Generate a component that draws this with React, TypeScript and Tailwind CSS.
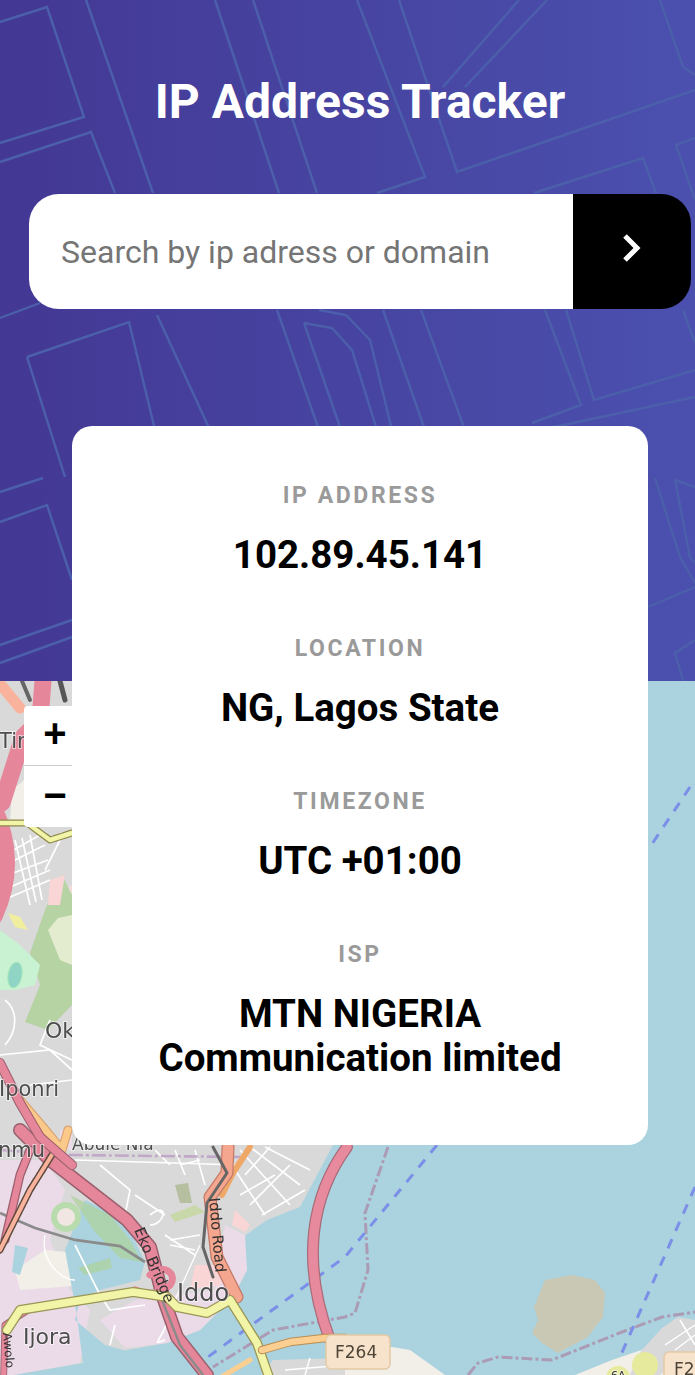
const patternLines = [
  "0,22 47,7 84,117 0,143",
  "0,162 91,132 115,193",
  "86,0 153,193",
  "215,0 279,193",
  "253,0 317,193",
  "357,0 425,177 377,193",
  "399,0 457,172 695,90",
  "443,87 519,0",
  "465,87 547,0",
  "534,193 643,158 656,193",
  "695,138 676,145 695,200",
  "660,0 683,67 695,75",
  "0,318 40,303",
  "27,357 129,322 155,430",
  "27,357 65,477",
  "157,315 210,430",
  "277,310 319,430",
  "304,323 332,328 352,350 377,430",
  "304,323 341,430",
  "319,310 346,315 370,340 392,430",
  "383,310 425,430",
  "421,310 465,430",
  "566,310 594,400 695,370",
  "545,310 581,405 532,423",
  "695,397 540,430",
  "0,492 43,478",
  "0,522 47,505 72,580",
  "0,645 72,620",
  "0,663 72,637",
  "655,478 680,557 695,583",
  "695,487 675,480 690,557 695,563",
  "648,607 695,587",
  "695,640 675,653 685,687",
  "683,310 695,343",
];

const stats = [
  { label: "IP ADDRESS", value: ["102.89.45.141"] },
  { label: "LOCATION", value: ["NG, Lagos State"] },
  { label: "TIMEZONE", value: ["UTC +01:00"] },
  { label: "ISP", value: ["MTN NIGERIA", "Communication limited"] },
];

function MapDrawing() {
  return (
    <svg viewBox="0 681 695 694" className="block h-full w-full">
      <defs>
        <filter id="soft" x="-5%" y="-5%" width="110%" height="110%">
          <feGaussianBlur stdDeviation="0.7" />
        </filter>
      </defs>
      <g filter="url(#soft)" fontFamily="'DejaVu Sans', sans-serif">
        <rect x="0" y="681" width="695" height="694" fill="#aad3df" />

        {/* land, left side and shore */}
        <polygon
          fill="#d9d9d9"
          points="0,681 333,681 333,1145 300,1207 267,1220 243,1237 247,1270 233,1297 200,1330 167,1343 127,1350 83,1363 13,1375 0,1375"
        />
        <polygon fill="#ebdbe8" points="0,1160 45,1160 65,1190 50,1240 70,1290 90,1310 80,1363 13,1375 0,1375" />
        <polygon fill="#ebdbe8" points="225,1225 245,1235 247,1270 233,1297 200,1330 167,1343 125,1348 100,1320 135,1300 215,1290" />
        <polygon fill="#ebdbe8" points="60,1130 72,1130 72,1150 60,1150" />
        <polygon fill="#f2efe9" points="45,1250 100,1255 85,1285 20,1290 15,1270" />
        <polygon fill="#ebdbe8" points="65,720 72,720 72,760 65,760" />
        <polygon fill="#f2dad9" points="55,895 72,885 72,915 58,920" />
        <polygon fill="#f9d5d5" points="195,1265 215,1265 222,1285 190,1290" />
        <polygon fill="#f9d5d5" points="235,1210 250,1225 245,1232 232,1225" />
        <polygon fill="#aad3df" points="85,1200 125,1220 145,1262 140,1280 100,1290 80,1300 75,1320 105,1345 130,1352 83,1363 76,1310 65,1250" />
        <polygon fill="#aad3df" points="15,1245 28,1248 20,1275 12,1272" />
        <polygon fill="#add19e" points="70,1195 110,1215 130,1240 142,1262 120,1258 95,1232" opacity="0.75" />
        <polygon fill="#add19e" points="78,1268 110,1258 112,1268 85,1275" opacity="0.75" />
        <circle cx="66" cy="1217" r="15" fill="#b9dcae" />
        <circle cx="66" cy="1217" r="9" fill="#f2e6e2" />
        <polygon fill="#c8d8a8" points="170,1215 195,1205 205,1212 175,1222" />
        <polygon fill="#b6bfa0" points="175,1185 188,1183 192,1203 180,1203" />

        {/* parks on the left */}
        <polygon fill="#b6d3a4" points="30,953 45,910 57,883 62,875 72,895 72,1005 48,1030 25,1022 40,985" />
        <polygon fill="#e4ecd0" points="48,930 58,918 72,915 72,965 60,960" />
        <polygon fill="#c8f2d2" points="0,930 20,945 40,965 35,985 15,990 0,990" />
        <ellipse cx="15" cy="975" rx="7" ry="13" fill="#8fd4c4" stroke="#a8e8b8" transform="rotate(10 15 975)" />
        <polygon fill="#f1ee9e" points="8,913 20,917 28,930 15,927" />
        <polygon fill="#f9d5d5" points="50,880 65,875 60,905 48,905" />
        <polygon fill="#f2efe9" points="12,790 24,780 24,823 10,823" />

        {/* streets */}
        <g fill="none" stroke="#ffffff" strokeWidth="1.7">
          <path d="M5,855 L40,835 M5,865 L45,845 M8,875 L48,860 M8,888 L50,870 M8,898 L50,880 M15,840 L30,905 M30,835 L42,900 M22,838 L36,902 M60,840 L45,870" />
          <path d="M5,1000 C18,1010 18,1030 5,1045 M50,1020 L40,1045 L72,1060 M0,1055 L50,1050 L72,1070 M30,1085 L72,1080 M25,1100 L50,1135" />
          <path d="M75,1160 L240,1165 M100,1165 L130,1190 L125,1215 M135,1195 L165,1215 M150,1215 C170,1200 165,1225 150,1225 M170,1240 L200,1235 M170,1245 L195,1250 M165,1235 L195,1255" />
          <path d="M175,1150 L185,1175 M195,1150 L205,1185 M155,1150 L170,1165 M180,1165 L200,1160" />
          <path d="M240,1150 L290,1205 M250,1147 L300,1185 M265,1147 L310,1170 M235,1170 L265,1215 M240,1195 L275,1175 M250,1205 L290,1165 M262,1215 L305,1190 M270,1147 L245,1175" />
          <path d="M75,1245 L100,1295 L110,1310 L145,1305 M115,1325 L110,1345 M170,1315 C160,1345 150,1345 165,1340" />
          <path d="M45,1235 C40,1260 60,1280 75,1280 M175,1300 L200,1245" strokeWidth="1.3" />
        </g>

        {/* boundary and ferry lines */}
        <polyline fill="none" stroke="#ab9bb5" strokeWidth="3" strokeDasharray="11 3 3 3" points="388,1147 365,1213 368,1270 355,1313 345,1317 273,1330 213,1367" />
        <polyline fill="none" stroke="#ab9bb5" strokeWidth="3" strokeDasharray="11 3 3 3" points="468,1375 478,1363 498,1357 552,1360 622,1332 662,1317 695,1312" />
        <polyline fill="none" stroke="#c2a8c8" strokeWidth="2.6" points="0,1150 72,1155 240,1157" strokeDasharray="14 3 3 3" />
        <g fill="none" stroke="#7c8fe8" strokeWidth="3" strokeDasharray="10 9">
          <polyline points="437,1145 345,1257 190,1370" />
          <polyline points="695,1187 620,1357" />
          <polyline points="690,787 648,850" />
        </g>

        {/* bottom right shore and island */}
        <polygon fill="#c8c8b4" points="545,1280 572,1275 595,1280 605,1293 603,1317 588,1337 558,1353 542,1343 532,1333 538,1320 534,1307" />
        <polygon fill="#f2efe9" points="392,1347 410,1350 445,1375 330,1375 330,1350" />
        <polygon fill="#d9d9d9" points="273,1360 345,1358 345,1375 262,1375" />
        <polygon fill="#f2efe9" points="575,1375 612,1360 662,1343 695,1335 695,1375" />
        <polygon fill="#d9d9d9" points="640,1352 662,1328 678,1317 695,1320 695,1352 660,1375 630,1375" />
        <circle cx="618" cy="1378" r="12" fill="#e6ea9c" />
        <circle cx="645" cy="1365" r="13" fill="#e6ea9c" />
        <g stroke="#fff" strokeWidth="1.5" fill="none">
          <path d="M665,1345 L695,1325 M675,1350 L695,1335 M680,1320 L695,1345" />
          <path d="M285,1370 L345,1365 M310,1358 L305,1375" />
        </g>

        {/* grey railway and link road */}
        <polyline fill="none" stroke="#8b8b8b" strokeWidth="2.8" points="0,1213 35,1228 75,1240 120,1246 145,1262" />

        {/* motorways and trunks */}
        <g fill="none" strokeLinejoin="round" strokeLinecap="round">
          <path d="M347,1147 C312,1195 300,1260 330,1340" stroke="#a86c7a" strokeWidth="12" />
          <path d="M347,1147 C312,1195 300,1260 330,1340" stroke="#e88a9e" strokeWidth="9.5" />

          <polyline points="250,1147 233,1173 222,1195" stroke="#f0a868" strokeWidth="6" />
          <polyline points="228,1147 227,1173 210,1197 217,1257 237,1297" stroke="#c47a68" strokeWidth="13" />
          <polyline points="228,1147 227,1173 210,1197 217,1257 237,1297" stroke="#f4a68e" strokeWidth="10.5" />
          <polyline points="213,1147 227,1173 207,1203 203,1247 213,1277" stroke="#666666" strokeWidth="3" />

          <polyline points="20,1130 50,1160 127,1220 150,1247 163,1297 177,1337 207,1375" stroke="#995f6c" strokeWidth="14" />
          <polyline points="20,1130 50,1160 127,1220 150,1247 163,1297 177,1337 207,1375" stroke="#e5869a" strokeWidth="11" />
          <polyline points="162,1300 180,1345 203,1375" stroke="#8b8b8b" strokeWidth="2.4" />
          <path d="M150,1275 C165,1262 178,1275 170,1285 C160,1295 145,1295 135,1290" stroke="#e5869a" strokeWidth="7" />

          <polyline points="3,1400 5,1325 28,1310 60,1304" stroke="#a56b78" strokeWidth="7" />
          <polyline points="3,1400 5,1325 28,1310 60,1304" stroke="#e5869a" strokeWidth="5" />

          <polyline points="30,1150 20,1175 5,1240" stroke="#995f6c" strokeWidth="9" />
          <polyline points="30,1150 20,1175 5,1240" stroke="#e5869a" strokeWidth="6.5" />
          <polyline points="55,1150 30,1190 0,1250" stroke="#5e4a3c" strokeWidth="7" strokeDasharray="5 2" />
          <polyline points="55,1150 30,1190 0,1250" stroke="#f9b29c" strokeWidth="4" />

          <polyline points="20,1100 43,1127 62,1150 68,1130" stroke="#d69e6a" strokeWidth="9" />
          <polyline points="20,1100 43,1127 62,1150 68,1130" stroke="#fbc98a" strokeWidth="7" />

          <polyline points="0,1063 20,1103 40,1137 72,1165" stroke="#995f6c" strokeWidth="10" />
          <polyline points="0,1063 20,1103 40,1137 72,1165" stroke="#e5869a" strokeWidth="8" />

          <polyline points="7,1330 20,1310 133,1292 167,1297 177,1307 207,1313 230,1300 257,1343 270,1380" stroke="#9a9655" strokeWidth="10" />
          <polyline points="7,1330 20,1310 133,1292 167,1297 177,1307 207,1313 230,1300 257,1343 270,1380" stroke="#f2f4a8" strokeWidth="7.5" />

          <polyline points="262,1350 290,1342 325,1338 345,1338" stroke="#b98c52" strokeWidth="8.5" />
          <polyline points="262,1350 290,1342 325,1338 345,1338" stroke="#fbcf92" strokeWidth="6.5" />
          <polyline points="220,1378 250,1360" stroke="#fbcf92" strokeWidth="5" />

          <path d="M43,681 L40,720 L23,737 L2,803" stroke="#e5869a" strokeWidth="17" />
          <path d="M-8,810 C8,845 8,880 -8,915" stroke="#e5869a" strokeWidth="22" />
          <path d="M-3,680 L20,708" stroke="#f9b29c" strokeWidth="11" />
          <polyline points="0,823 27,823 50,840 72,833" stroke="#8e8a4a" strokeWidth="7" strokeDasharray="8 2" />
          <polyline points="0,823 27,823 50,840 72,833" stroke="#f2f4a8" strokeWidth="4.5" />
          <path d="M22,681 L30,700" stroke="#666" strokeWidth="4" />
          <path d="M60,681 L65,700" stroke="#555" strokeWidth="5" />
        </g>

        {/* labels */}
        <g fill="#4d4d4d" stroke="#ffffff" strokeOpacity="0.55" strokeWidth="2" paintOrder="stroke">
          <text x="-1" y="748" fontSize="21">Tir</text>
          <text x="45" y="1038" fontSize="22">Ok</text>
          <text x="-1" y="1096" fontSize="21">Iponri</text>
          <text x="-2" y="1157" fontSize="21">nmu</text>
          <text x="72" y="1150" fontSize="17">Abule Nla</text>
          <text x="177" y="1301" fontSize="24">Iddo</text>
          <text x="23" y="1344" fontSize="22">Ijora</text>
          <text x="0" y="0" fontSize="15" fill="#333" strokeOpacity="0" transform="translate(134 1230) rotate(67)">Eko Bridge</text>
          <text x="0" y="0" fontSize="15" fill="#333" strokeOpacity="0" transform="translate(209 1198) rotate(85)">Iddo Road</text>
          <text x="0" y="0" fontSize="12" fill="#333" strokeOpacity="0" transform="translate(3 1333) rotate(85)">Awolo</text>
          <text x="611" y="1379" fontSize="11" fill="#333">6A</text>
        </g>

        {/* road shields */}
        <g fontSize="17">
          <rect x="326" y="1335" width="64" height="34" rx="5" fill="#f7e3cc" stroke="#e4c9a4" strokeWidth="1.5" />
          <text x="335" y="1358" fill="#4d4437">F264</text>
          <rect x="664" y="1352" width="50" height="34" rx="5" fill="#f7e3cc" stroke="#e4c9a4" strokeWidth="1.5" />
          <text x="674" y="1375" fill="#4d4437">F2</text>
        </g>
      </g>
    </svg>
  );
}

export default function App() {
  return (
    <div className="relative h-[1375px] w-[695px] overflow-hidden font-['Roboto',sans-serif]">
      <header className="relative h-[681px] bg-gradient-to-r from-[#433894] to-[#4b50ae]">
        <svg viewBox="0 0 695 681" className="absolute inset-0 h-full w-full">
          <defs>
            <filter id="lines">
              <feGaussianBlur stdDeviation="0.4" />
            </filter>
          </defs>
          <g filter="url(#lines)">
            {patternLines.map((points) => (
              <polyline key={points} points={points} fill="none" stroke="#4b5fab" strokeWidth="2.4" />
            ))}
          </g>
        </svg>
        <div className="relative flex flex-col pt-[72px]">
          <h1 className="pl-[25px] text-center text-[48px] leading-[60px] font-bold text-white">
            IP Address Tracker
          </h1>
          <form className="mt-[62px] mr-[4px] ml-[29px] flex h-[115px] overflow-hidden rounded-[30px]">
            <input
              className="min-w-0 flex-1 bg-white pt-[1px] pl-[32px] text-[32px] text-black outline-none placeholder:text-[#757575]"
              placeholder="Search by ip adress or domain"
            />
            <button type="button" className="flex w-[118px] items-center justify-center bg-black pb-[7px]">
              <svg width="20" height="30" viewBox="0 0 20 30" fill="none" stroke="#ffffff" strokeWidth="5">
                <polyline points="3,3 15,15 3,27" />
              </svg>
            </button>
          </form>
        </div>
      </header>

      <div className="relative h-[694px] bg-[#aad3df]">
        <MapDrawing />
        <div className="absolute top-[25px] left-[24px] w-[62px] rounded-[4px] bg-white text-center font-['Liberation_Sans',sans-serif] text-[40px] font-bold text-black">
          <div className="flex h-[60px] items-center justify-center border-b border-[#cccccc] pb-[6px]">+</div>
          <div className="flex h-[61px] items-center justify-center pb-[3px]">−</div>
        </div>
      </div>

      <section className="absolute top-[426px] left-[72px] flex h-[719px] w-[576px] flex-col items-center rounded-[20px] bg-white pt-[52px]">
        {stats.map((stat) => (
          <div key={stat.label} className="mb-[54px] flex flex-col items-center gap-[19px]">
            <h2 className="text-[23px] leading-[36px] font-bold tracking-[2.6px] text-[#9a9a9a]">{stat.label}</h2>
            <p className="text-center text-[38.5px] leading-[44px] font-bold text-black">
              {stat.value.map((line) => (
                <span key={line} className="block">
                  {line}
                </span>
              ))}
            </p>
          </div>
        ))}
      </section>
    </div>
  );
}
